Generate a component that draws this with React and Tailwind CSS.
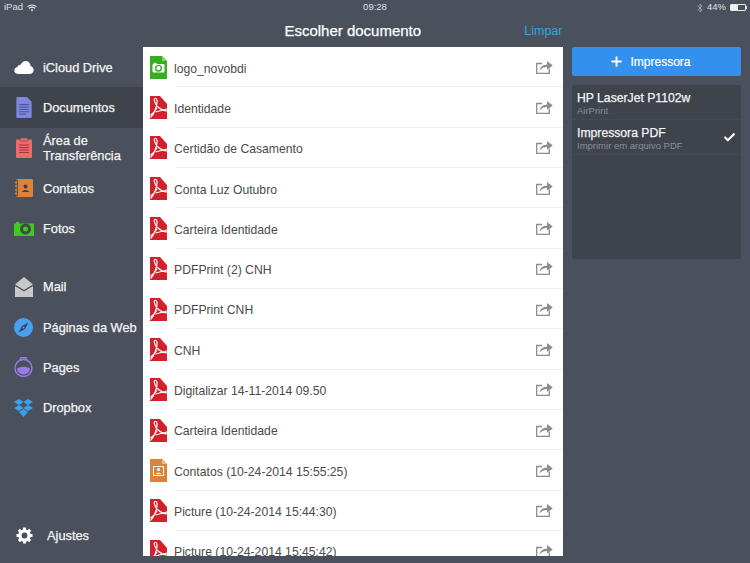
import React from "react";
import { Plus, Check } from "lucide-react";

const PdfIcon = () => (
  <svg width="17" height="23" viewBox="0 0 17 23" className="shrink-0">
    <path d="M0 0H10L17 8V23H0Z" fill="#d4202a" />
    <path
      d="M0.500 21.500C4 18 7.500 10 7 4.500C6.800 1.500 3.800 1.500 4.300 4.500C5 9 10 14.500 17 15M7 12C5.500 14.500 3 17.500 0.500 19M5.500 16L17 13"
      fill="none"
      stroke="#fff"
      strokeWidth="1.200"
    />
  </svg>
);

const ImageFileIcon = () => (
  <svg width="17" height="23" viewBox="0 0 17 23" className="shrink-0">
    <path d="M0 0H12L17 5V23H0Z" fill="#35ae1f" />
    <path d="M12 0V5H17Z" fill="#7ed46c" />
    <rect x="2.500" y="8" width="12" height="8.500" rx="1" fill="#fff" />
    <rect x="3.500" y="6.800" width="3" height="2" fill="#fff" />
    <circle cx="8.500" cy="12.200" r="2.800" fill="none" stroke="#35ae1f" strokeWidth="1.400" />
  </svg>
);

const ContactFileIcon = () => (
  <svg width="17" height="23" viewBox="0 0 17 23" className="shrink-0">
    <path d="M0 0H12L17 5V23H0Z" fill="#db8339" />
    <path d="M12 0V5H17Z" fill="#eeb88a" />
    <rect x="3.500" y="7.500" width="10" height="9" fill="none" stroke="#fff" strokeWidth="1" />
    <circle cx="8.500" cy="10.500" r="1.500" fill="#fff" />
    <path d="M5.800 15C6 13.200 11 13.200 11.200 15Z" fill="#fff" />
  </svg>
);

const ShareIcon = () => (
  <svg width="17" height="14" viewBox="0 0 17 14" className="shrink-0">
    <path d="M6 3.500H0.700V13.300H13.300V8.500" fill="none" stroke="#8c8c8c" strokeWidth="1.300" />
    <path d="M3.500 10.500C4.200 6.500 7 4.700 11 4.700V1L16.800 5.400L11 9.800V6.900C8 6.900 5.500 7.800 3.500 10.500Z" fill="#8c8c8c" />
  </svg>
);

const CloudIcon = () => (
  <svg width="20" height="13" viewBox="0 0 21 14">
    <path d="M4.500 14C2 14 0 12.400 0 10.200C0 8.200 1.500 6.800 3.400 6.500C3.700 4.600 5.300 3.600 7 4C8 1.600 10 0 12.400 0C15.300 0 17.500 2.300 17.500 5.300C19.500 5.700 21 7.500 21 9.700C21 12.200 19 14 16.500 14Z" fill="#fff" />
  </svg>
);

const DocIcon = () => (
  <svg width="16" height="21" viewBox="0 0 16 22">
    <path d="M1 0H11L16 5V21A1 1 0 0 1 15 22H1A1 1 0 0 1 0 21V1A1 1 0 0 1 1 0Z" fill="#7e87dc" />
    <path d="M3 8H13M3 10.500H13M3 13H13M3 15.500H13M3 18H10" stroke="#3f4a8e" strokeWidth="0.900" />
  </svg>
);

const ClipboardIcon = () => (
  <svg width="16" height="20" viewBox="0 0 16 20">
    <rect x="0" y="1.500" width="16" height="18.500" rx="1" fill="#ef6b6b" />
    <rect x="4" y="0" width="8" height="3" rx="0.800" fill="#ef6b6b" stroke="#4b515c" strokeWidth="0.700" />
    <path d="M3 7H13M3 9.500H13M3 12H13M3 14.500H13" stroke="#8f3d42" strokeWidth="1" />
  </svg>
);

const ContactsIcon = () => (
  <svg width="18" height="18" viewBox="0 0 18 18">
    <rect x="1.500" y="0" width="16.500" height="18" rx="1" fill="#dc8239" />
    <path d="M0 3.500H3M0 7H3M0 11H3M0 14.500H3" stroke="#dc8239" strokeWidth="1.300" />
    <path d="M2.500 1V17" stroke="#55504a" strokeWidth="1" />
    <circle cx="10.500" cy="7.500" r="2" fill="#2f3f57" />
    <path d="M7 13C7.300 10.500 13.700 10.500 14 13Z" fill="#2f3f57" />
  </svg>
);

const CameraIcon = () => (
  <svg width="20" height="15" viewBox="0 0 20 15">
    <path d="M0 2.500H2V1H5V2.500H20V15H0Z" fill="#3ecb1e" />
    <circle cx="11.500" cy="8" r="5.500" fill="#3f4a4a" />
    <circle cx="11.500" cy="8" r="2.500" fill="#3ecb1e" />
  </svg>
);

const MailIcon = () => (
  <svg width="18" height="20" viewBox="0 0 18 20">
    <path d="M0 7.500L9 0L18 7.500L9 13Z" fill="#c8c8c8" />
    <path d="M0 9L9 14.500L18 9V20H0Z" fill="#c8c8c8" />
  </svg>
);

const CompassIcon = () => (
  <svg width="19" height="19" viewBox="0 0 19 19">
    <circle cx="9.500" cy="9.500" r="9.500" fill="#4b9ff0" />
    <path d="M14.500 4.500L11 11L4.500 14.500L8 8Z" fill="#3c4656" />
    <circle cx="9.500" cy="9.500" r="1" fill="#4b9ff0" />
  </svg>
);

const PagesIcon = () => (
  <svg width="19" height="20" viewBox="0 0 19 20">
    <circle cx="9.500" cy="11" r="8.500" fill="none" stroke="#9b7bea" strokeWidth="1.400" />
    <path d="M3 11.500C7 9 12 9 16 11.500C15.500 15 13 17.500 9.500 17.500C6 17.500 3.500 15 3 11.500Z" fill="#9b7bea" />
    <path d="M6 3L7 0.700H12L13 3" fill="none" stroke="#9b7bea" strokeWidth="1.400" />
  </svg>
);

const DropboxIcon = () => (
  <svg width="19" height="18" viewBox="0 0 19 18">
    <path d="M5 0L9.500 3L5 6L0 3ZM14 0L19 3L14 6L9.500 3ZM0 9L5 6L9.500 9L5 12ZM19 9L14 6L9.500 9L14 12Z" fill="#3aa1ec" />
    <path d="M5 13L9.500 10L14 13L9.500 18Z" fill="#3aa1ec" />
  </svg>
);

const GearIcon = () => (
  <svg width="17" height="17" viewBox="0 0 17 17">
    <circle cx="8.500" cy="8.500" r="4.600" fill="none" stroke="#fff" strokeWidth="3.400" />
    <path
      d="M8.500 0.500V16.500M0.500 8.500H16.500M2.800 2.800L14.200 14.200M14.200 2.800L2.800 14.200"
      stroke="#fff"
      strokeWidth="3"
      strokeDasharray="3.200 9.600"
    />
  </svg>
);

const WifiIcon = () => (
  <svg width="10" height="8" viewBox="0 0 10 8">
    <path d="M0.500 2.800C3 0.400 7 0.400 9.500 2.800M2 4.500C3.700 3 6.300 3 8 4.500" fill="none" stroke="#e6e7e9" strokeWidth="1.100" />
    <path d="M3.500 5.800C4.400 5 5.600 5 6.500 5.800L5 7.500Z" fill="#e6e7e9" />
  </svg>
);

const BluetoothIcon = () => (
  <svg width="6" height="10" viewBox="0 0 6 10">
    <path d="M0.500 2.700L5 6.800L3 9V1L5 3.200L0.500 7.300" fill="none" stroke="#a9adb3" strokeWidth="0.800" />
  </svg>
);

const Battery = () => (
  <div className="flex items-center">
    <div className="w-[16px] h-[7px] border border-[#e6e7e9] rounded-[1px]">
      <div className="w-[7px] h-full bg-[#f2f2f2]" />
    </div>
    <div className="w-[1px] h-[3px] bg-[#e6e7e9]" />
  </div>
);

const sourcesTop = [
  { label: "iCloud Drive", icon: <CloudIcon /> },
  { label: "Documentos", icon: <DocIcon />, active: true },
  { label: "Área de Transferência", icon: <ClipboardIcon /> },
  { label: "Contatos", icon: <ContactsIcon /> },
  { label: "Fotos", icon: <CameraIcon /> },
];

const sourcesBottom = [
  { label: "Mail", icon: <MailIcon /> },
  { label: "Páginas da Web", icon: <CompassIcon /> },
  { label: "Pages", icon: <PagesIcon /> },
  { label: "Dropbox", icon: <DropboxIcon /> },
];

const files = [
  { name: "logo_novobdi", icon: <ImageFileIcon /> },
  { name: "Identidade" },
  { name: "Certidão de Casamento" },
  { name: "Conta Luz Outubro" },
  { name: "Carteira Identidade" },
  { name: "PDFPrint (2) CNH" },
  { name: "PDFPrint CNH" },
  { name: "CNH" },
  { name: "Digitalizar 14-11-2014 09.50" },
  { name: "Carteira Identidade" },
  { name: "Contatos (10-24-2014 15:55:25)", icon: <ContactFileIcon /> },
  { name: "Picture (10-24-2014 15:44:30)" },
  { name: "Picture (10-24-2014 15:45:42)" },
];

const SourceItem = ({ label, icon, active }) => (
  <div className={`h-[40.33px] flex items-center shrink-0 ${active ? "bg-[#3e434c]" : ""}`}>
    <div className="w-[43px] pl-[4px] flex justify-center shrink-0">{icon}</div>
    <span className="text-[12.8px] leading-[15px] text-[#f4f4f5] [-webkit-text-stroke:0.25px_#f4f4f5]">{label}</span>
  </div>
);

const FileRow = ({ name, icon }) => (
  <div className="h-[40.33px] flex items-center shrink-0 pl-[7px]">
    {icon || <PdfIcon />}
    <div className="flex-1 h-full ml-[9px] pr-[10px] flex items-center justify-between border-b border-[#efefef]">
      <span className="-ml-[2px] pt-[4px] text-[12.2px] text-[#4a4a4a]">{name}</span>
      <ShareIcon />
    </div>
  </div>
);

const App = () => {
  return (
    <div className="w-[750px] h-[563px] bg-[#4b515c] flex flex-col overflow-hidden font-['Liberation_Sans',sans-serif]">
      <div className="h-[15px] flex items-center justify-between pl-[4px] pr-[3px] text-[9.5px] text-[#dfe0e3] shrink-0 relative">
        <div className="flex items-center gap-[4px]">
          iPad
          <WifiIcon />
        </div>
        <span className="absolute left-0 right-0 text-center">09:28</span>
        <div className="flex items-center gap-[4px]">
          <BluetoothIcon />
          44%
          <Battery />
        </div>
      </div>

      <div className="h-[32px] shrink-0 flex items-center pl-[143px]">
        <div className="w-[419.5px] flex items-center justify-center relative">
          <span className="text-[15px] text-white [-webkit-text-stroke:0.25px_#fff]">Escolher documento</span>
          <span className="absolute right-0 text-[12.5px] text-[#2fa5e6]">Limpar</span>
        </div>
      </div>

      <div className="flex flex-1 min-h-0">
        <aside className="w-[143px] shrink-0 flex flex-col">
          {sourcesTop.map((s) => (
            <SourceItem key={s.label} {...s} />
          ))}
          <div className="h-[18px] shrink-0" />
          {sourcesBottom.map((s) => (
            <SourceItem key={s.label} {...s} />
          ))}
          <div className="mt-auto mb-[18px] flex items-center">
            <div className="w-[47px] pl-[1px] flex justify-center">
              <GearIcon />
            </div>
            <span className="text-[12.8px] text-[#f4f4f5] [-webkit-text-stroke:0.25px_#f4f4f5]">Ajustes</span>
          </div>
        </aside>

        <main className="w-[419.5px] h-[509px] shrink-0 bg-white overflow-hidden flex flex-col">
          {files.map((f, i) => (
            <FileRow key={i} {...f} />
          ))}
        </main>

        <section className="w-[169px] ml-[9.5px] shrink-0 flex flex-col">
          <div className="h-[28.5px] pt-[1px] bg-[#3390ec] rounded-[2px] flex items-center justify-center gap-[6px] pr-[13px] text-white text-[12px] [-webkit-text-stroke:0.2px_#fff]">
            <Plus size={15} strokeWidth={3} />
            Impressora
          </div>
          <div className="mt-[9.5px] h-[174px] bg-[#3e434c] rounded-[3px]">
            <div className="h-[35px] pl-[5px] pt-[6px] border-b border-[#444952]">
              <div className="text-[12.2px] leading-[14px] text-[#f4f4f5] [-webkit-text-stroke:0.25px_#f4f4f5]">HP LaserJet P1102w</div>
              <div className="text-[9.5px] leading-[11px] text-[#8b8f96]">AirPrint</div>
            </div>
            <div className="h-[35px] pl-[5px] pr-[5px] pt-[6px] border-b border-[#444952] flex items-start justify-between">
              <div>
                <div className="text-[12.2px] leading-[14px] text-[#f4f4f5] [-webkit-text-stroke:0.25px_#f4f4f5]">Impressora PDF</div>
                <div className="text-[9.5px] leading-[11px] text-[#8b8f96]">Imprimir em arquivo PDF</div>
              </div>
              <Check size={13} strokeWidth={4} className="text-white mt-[5px]" />
            </div>
          </div>
        </section>
      </div>
    </div>
  );
};

export default App;
